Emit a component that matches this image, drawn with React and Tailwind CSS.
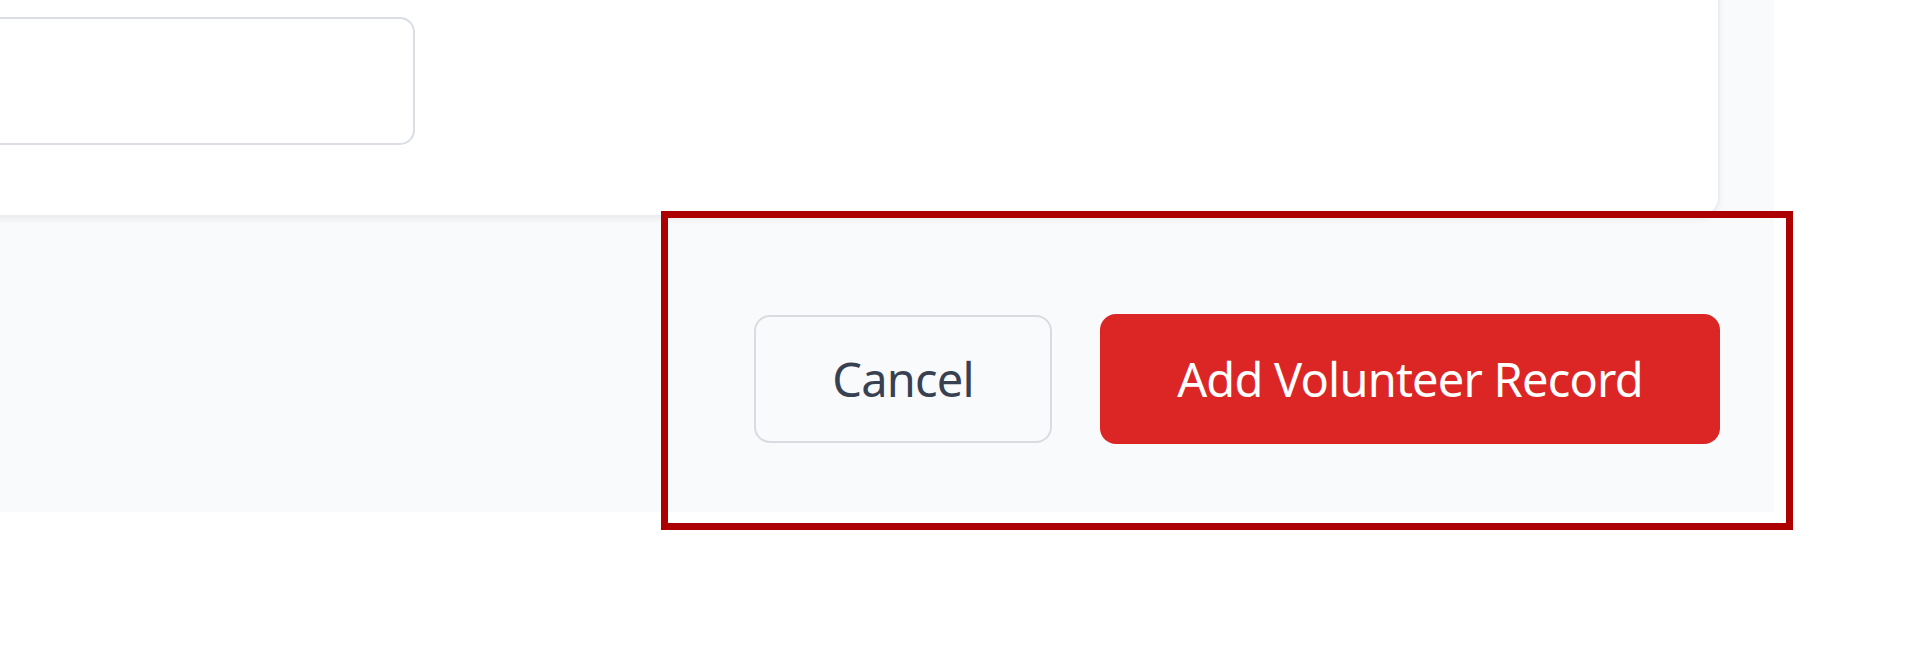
export default function App() {
  return (
    <div className="relative h-[655px] w-full overflow-hidden bg-white" style={{ fontFamily: '"Noto Sans", "Open Sans", sans-serif' }}>
      <div className="-ml-[60px] w-[1834px] bg-[#f9fafb] pb-[68px]">
        {/* form card, mostly scrolled out of view */}
        <div className="pr-[54px]">
          <div className="-mt-[40px] rounded-[20px] border-2 border-[#eceef1] bg-white pt-[55px] pb-[70px] pl-[38px] shadow-[0_3px_6px_rgba(0,0,0,0.05)]">
            <div className="h-[128px] w-[435px] rounded-[15px] border-2 border-[#dadde3] bg-white" />
          </div>
        </div>

        <div className="flex items-center justify-end gap-[48px] pt-[97px] pr-[54px]">
          <button className="flex h-[128px] w-[298px] items-center justify-center rounded-[16px] border-2 border-[#d8dbe0] bg-transparent text-[47px] tracking-[-0.8px] text-[#374151]">
            Cancel
          </button>
          <button className="flex h-[130px] w-[620px] items-center justify-center rounded-[16px] bg-[#dc2626] text-[47px] tracking-[-0.8px] text-white">
            Add Volunteer Record
          </button>
        </div>
      </div>

      {/* highlight frame */}
      <div className="pointer-events-none absolute left-[661px] top-[211px] h-[319px] w-[1132px] border-[7px] border-[#ad0000]" />
    </div>
  );
}
